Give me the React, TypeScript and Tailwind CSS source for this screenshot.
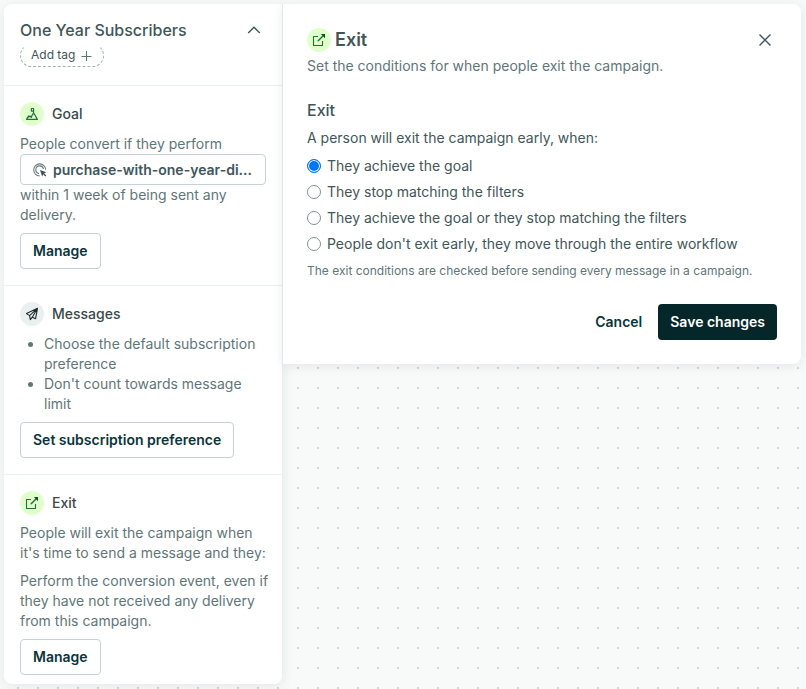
import { useState } from "react";
import type { ReactNode } from "react";

const outlineButton =
  "h-9 rounded border border-[#c4d2d4] bg-white px-3 text-sm font-semibold text-[#0b353b]";

function ExitIcon() {
  return (
    <svg viewBox="0 0 24 24" className="size-6" fill="none" stroke="#1f7534" aria-hidden="true">
      <path d="M11 8.5H6.5v9h9V13" strokeWidth="1.1" strokeLinejoin="round" />
      <path d="M11.2 12.8L16 8" strokeWidth="1.4" strokeLinecap="round" />
      <path d="M13.8 6H18v4.2z" fill="#06591c" stroke="none" />
    </svg>
  );
}

function GoalIcon() {
  return (
    <svg viewBox="0 0 24 24" className="size-6" fill="none" stroke="#1f7534" aria-hidden="true">
      <path d="M13.6 11.5v-5h-2.2v2.6h2.2" strokeWidth="1.2" strokeLinejoin="round" />
      <path
        d="M8.8 13.6l-2.2 3.8h10.8l-3.2-5.6h-1.4l-1.6 3.6-1.2-1.4-1.6 1.4"
        strokeWidth="1.2"
        strokeLinejoin="round"
      />
    </svg>
  );
}

function PlaneIcon() {
  return (
    <svg viewBox="0 0 24 24" className="size-6" fill="none" stroke="#1d2b30" aria-hidden="true">
      <path
        d="M17.5 6.3L6.5 11.6l3.1 2 .7 4 2-2.4 3.2 1.6zM9.6 13.6l7.9-7.3-5.2 8.9"
        strokeWidth="1.1"
        strokeLinejoin="round"
      />
    </svg>
  );
}

function EventIcon() {
  return (
    <svg viewBox="0 0 14 14" className="size-3.5 shrink-0" fill="none" stroke="#6a7f82" aria-hidden="true">
      <path d="M6.6 12.9A6 6 0 1 1 12.7 6.8" strokeWidth="1.1" />
      <path d="M6 10.6A3.9 3.9 0 1 1 10.5 6" strokeWidth="1.1" />
      <path d="M7 7l6.4 2.3-2.3 1 2.2 2.3-.9.9-2.2-2.3-1 2.2z" fill="#3d5357" stroke="none" />
    </svg>
  );
}

function Badge({ tone, children }: { tone: "green" | "gray"; children: ReactNode }) {
  return (
    <span
      className={`size-6 shrink-0 rounded-full ${tone === "green" ? "bg-[#e0ffcc]" : "bg-[#eaf0f0]"}`}
    >
      {children}
    </span>
  );
}

function SectionHeading({ tone, icon, title }: { tone: "green" | "gray"; icon: ReactNode; title: string }) {
  return (
    <div className="mb-2 flex items-center gap-2">
      <Badge tone={tone}>{icon}</Badge>
      <h3 className="text-sm font-medium text-[#38494c]">{title}</h3>
    </div>
  );
}

function Sidebar() {
  return (
    <aside className="w-[279px] shrink-0 rounded-l-lg rounded-br-lg border-r border-[#e9efef] bg-white text-sm text-[#5f7679] shadow-[0_2px_12px_rgba(20,30,60,0.09)]">
      <header className="border-b border-[#e9efef] px-4 pt-3.5 pb-[18px]">
        <div className="flex items-center justify-between">
          <h2 className="text-base leading-6 font-medium text-[#41565a]">One Year Subscribers</h2>
          <button type="button" aria-label="Collapse" className="flex size-6 items-center justify-center">
            <svg viewBox="0 0 14 14" className="size-3.5" fill="none" stroke="#41565a" strokeWidth="1.4">
              <path d="M1.2 10L7 4.2 12.8 10" />
            </svg>
          </button>
        </div>
        <button
          type="button"
          className="mt-0.5 flex h-[23px] items-center gap-1.5 rounded-full border border-dashed border-[#9fb3b6] border-t-transparent px-2.5 pb-0.5 text-xs text-[#41565a]"
        >
          Add tag
          <svg viewBox="0 0 12 12" className="mt-0.5 size-3" fill="none" stroke="#5f7679">
            <path d="M5.5 1v10M.5 6.5h10" />
          </svg>
        </button>
      </header>

      <section className="border-b border-[#e9efef] p-4">
        <SectionHeading tone="green" icon={<GoalIcon />} title="Goal" />
        <p>People convert if they perform</p>
        <button
          type="button"
          className="flex h-[31px] w-full items-center gap-1.5 rounded border border-[#c4d2d4] px-3 font-semibold whitespace-nowrap text-[#41565a]"
        >
          <EventIcon />
          purchase-with-one-year-di...
        </button>
        <p>within 1 week of being sent any delivery.</p>
        <button type="button" className={`mt-2 ${outlineButton}`}>
          Manage
        </button>
      </section>

      <section className="border-b border-[#e9efef] p-4">
        <SectionHeading tone="gray" icon={<PlaneIcon />} title="Messages" />
        <ul className="list-disc pl-6">
          <li>Choose the default subscription preference</li>
          <li>Don't count towards message limit</li>
        </ul>
        <button type="button" className={`mt-2 ${outlineButton}`}>
          Set subscription preference
        </button>
      </section>

      <section className="pt-4 pr-2 pb-[9px] pl-4">
        <SectionHeading tone="green" icon={<ExitIcon />} title="Exit" />
        <p>People will exit the campaign when it's time to send a message and they:</p>
        <p className="mt-2">
          Perform the conversion event, even if they have not received any delivery from this campaign.
        </p>
        <button type="button" className={`mt-2 ${outlineButton}`}>
          Manage
        </button>
      </section>
    </aside>
  );
}

const options = [
  "They achieve the goal",
  "They stop matching the filters",
  "They achieve the goal or they stop matching the filters",
  "People don't exit early, they move through the entire workflow",
];

function ExitPanel() {
  const [selected, setSelected] = useState(0);

  return (
    <main className="min-w-0 flex-1 rounded-r-lg bg-white p-6 text-sm text-[#41565a] shadow-[0_2px_12px_rgba(20,30,60,0.09)]">
      <div className="flex items-center gap-1">
        <Badge tone="green">
          <ExitIcon />
        </Badge>
        <h1 className="flex-1 text-lg leading-6 font-semibold">Exit</h1>
        <button type="button" aria-label="Close" className="flex size-6 items-center justify-center">
          <svg viewBox="0 0 12 12" className="size-3" fill="none" stroke="#41565a" strokeWidth="1.4">
            <path d="M.5.5l11 11M11.5.5l-11 11" />
          </svg>
        </button>
      </div>
      <p className="mt-1 text-[#5f7679]">Set the conditions for when people exit the campaign.</p>

      <form onSubmit={(event) => event.preventDefault()}>
        <fieldset className="mt-[22px]">
          <legend className="text-base leading-6 font-medium">Exit</legend>
          <p className="mt-1.5">A person will exit the campaign early, when:</p>
          <div className="mt-2 flex flex-col items-start gap-1.5">
            {options.map((option, index) => (
              <label key={option} className="flex items-center gap-1.5">
                <input
                  type="radio"
                  name="exit"
                  checked={selected === index}
                  onChange={() => setSelected(index)}
                  className="size-3.5 shrink-0 appearance-none rounded-full border border-[#7f9194] bg-white checked:border-[#0075ff] checked:bg-[#0075ff] checked:shadow-[inset_0_0_0_1px_white]"
                />
                {option}
              </label>
            ))}
          </div>
        </fieldset>
        <p className="mt-2 text-xs leading-[18px] text-[#5f7679]">
          The exit conditions are checked before sending every message in a campaign.
        </p>
        <div className="mt-6 flex justify-end gap-1">
          <button type="button" className="h-9 px-3 font-semibold text-[#0b353b]">
            Cancel
          </button>
          <button type="submit" className="h-9 rounded bg-[#06272a] px-3 font-semibold text-white">
            Save changes
          </button>
        </div>
      </form>
    </main>
  );
}

export default function App() {
  return (
    <div className="flex min-h-screen items-start bg-[#f8faf9] bg-[radial-gradient(circle_at_18px_8px,#cdd9da_1px,transparent_1px)] bg-[length:20px_20px] py-1 pr-[5px] pl-1 font-[Inter,sans-serif]">
      <Sidebar />
      <ExitPanel />
    </div>
  );
}
